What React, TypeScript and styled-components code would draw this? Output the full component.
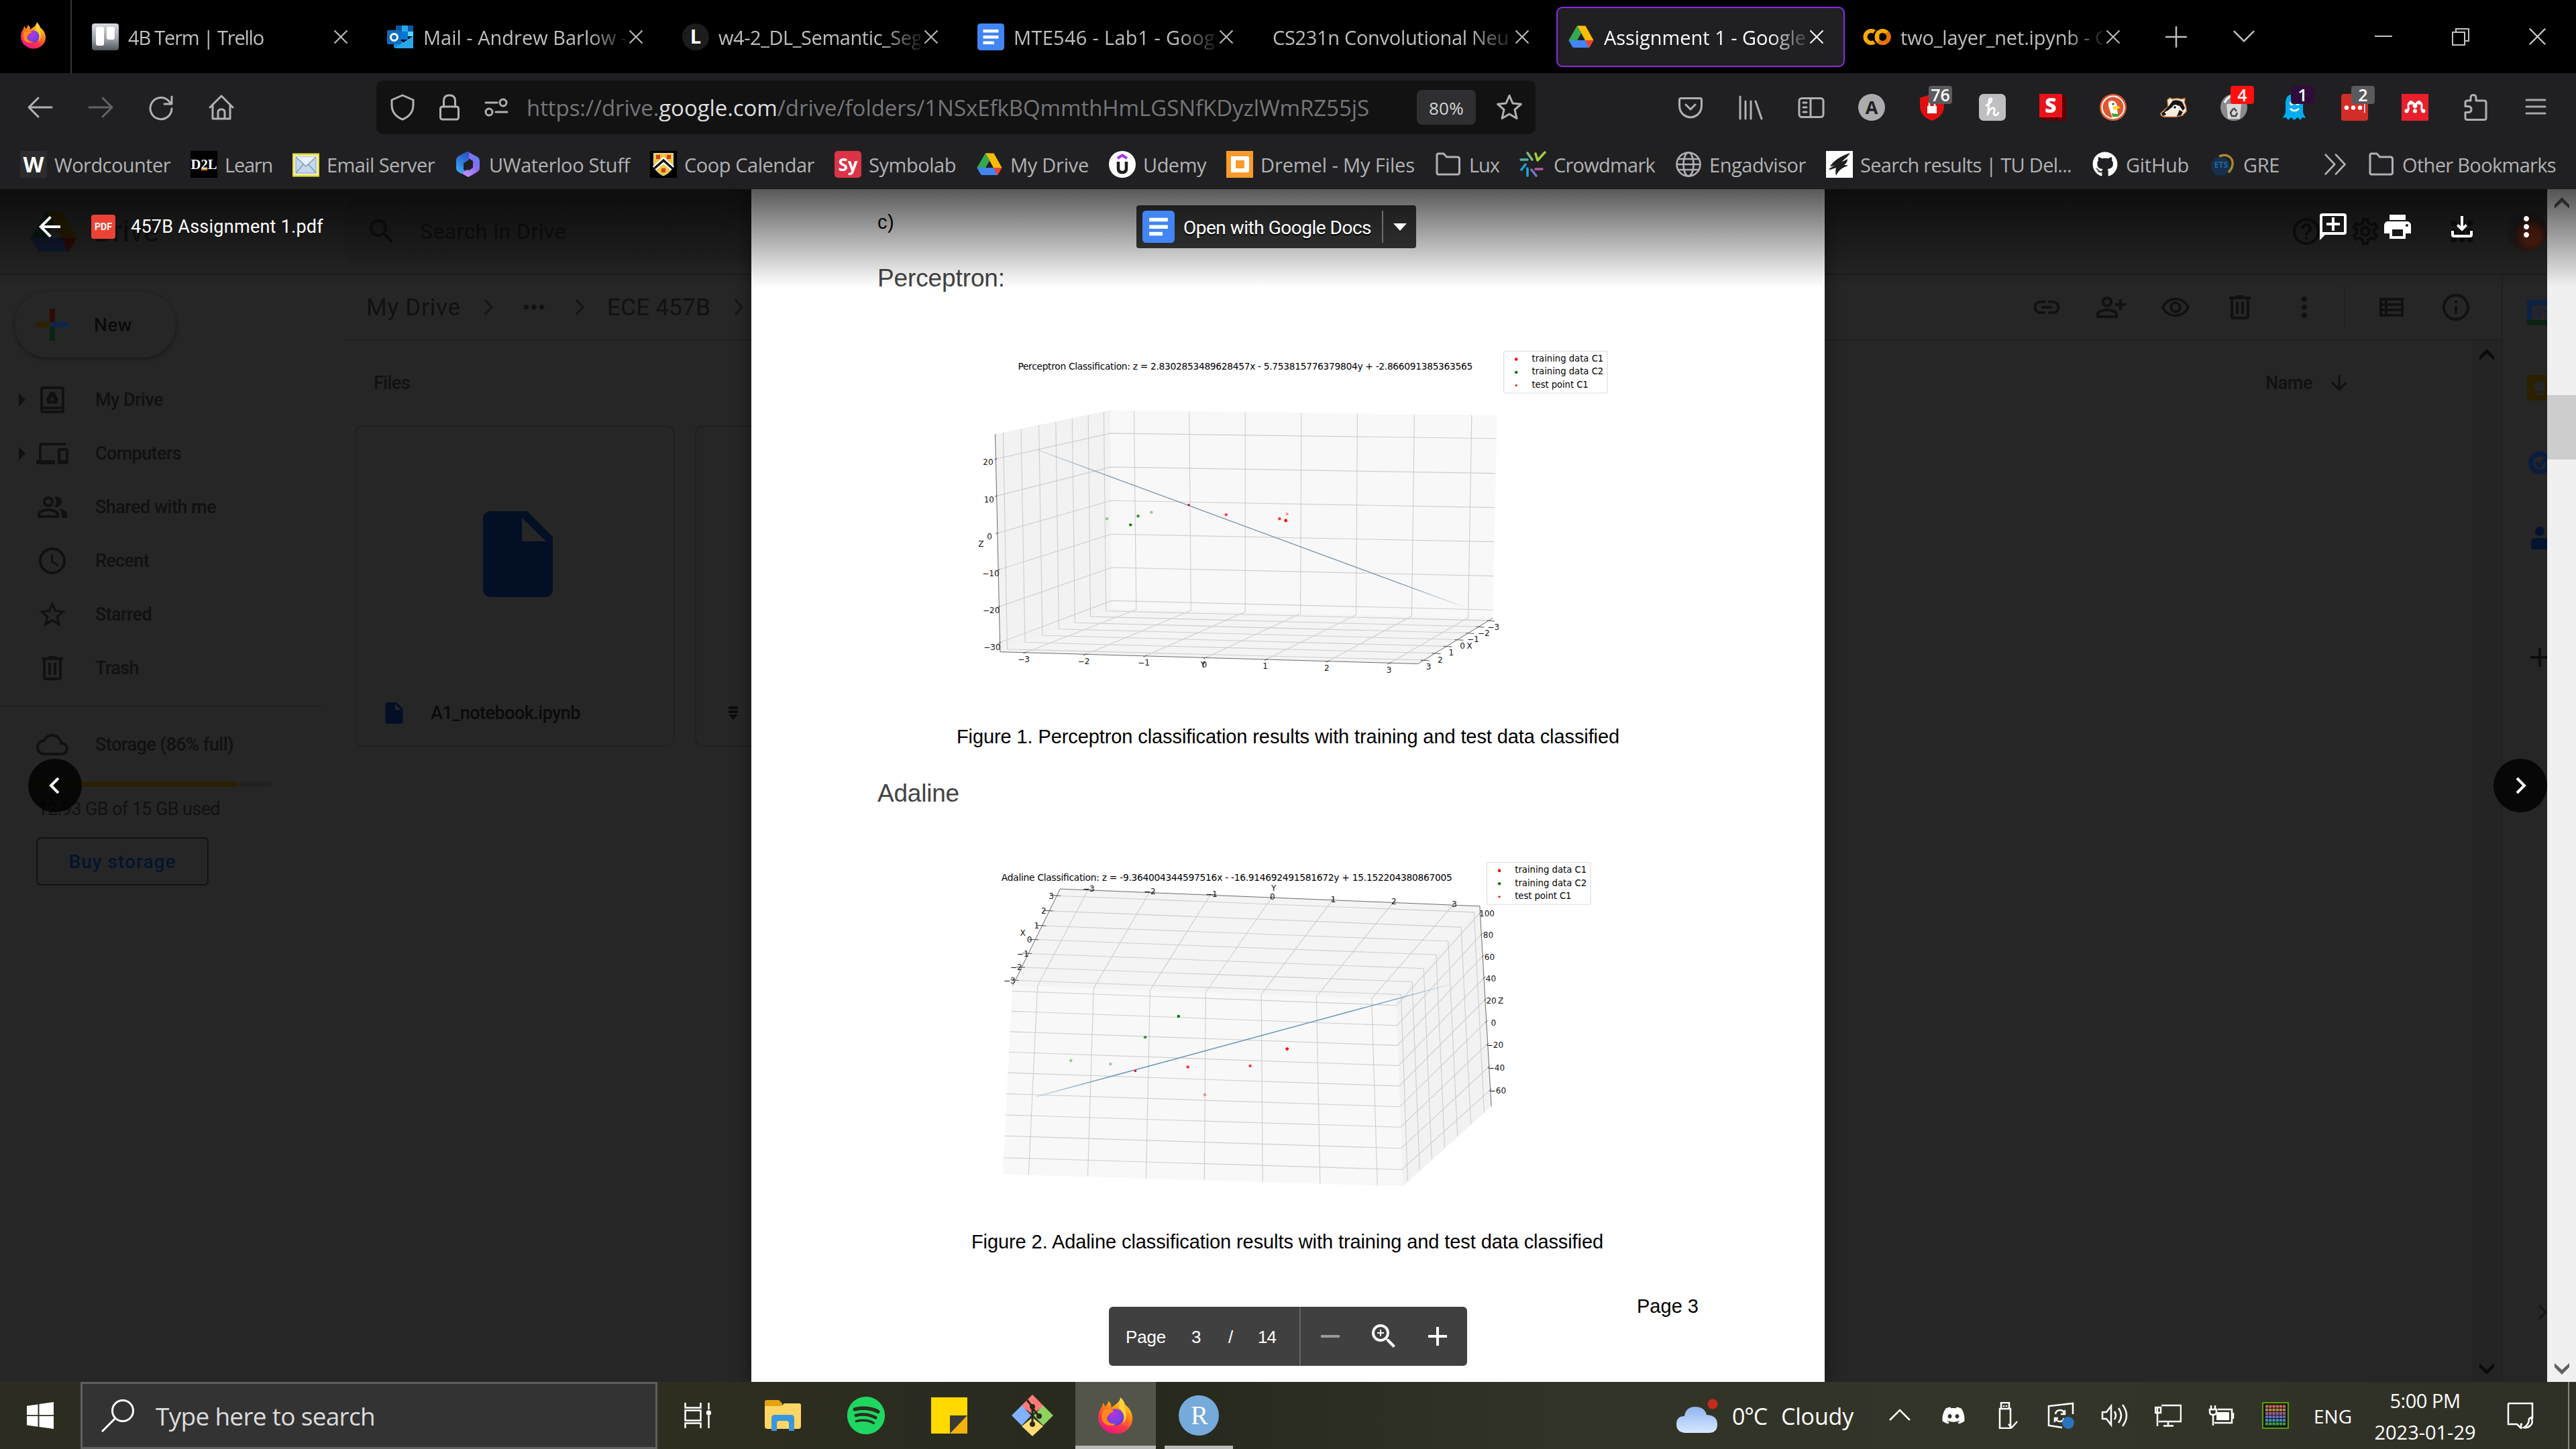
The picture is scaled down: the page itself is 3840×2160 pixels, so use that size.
import React, { useLayoutEffect, useRef, useState } from "react";
import styled, { createGlobalStyle, css } from "styled-components";
import {
  MdSearch, MdArrowBack, MdMoreVert, MdMoreHoriz, MdInfoOutline, MdHelpOutline,
  MdOutlineSettings, MdApps, MdPrint, MdZoomIn, MdAccessTime, MdStarBorder, MdOutlineDevices,
  MdOutlinePeopleAlt, MdOutlineRemoveRedEye, MdOutlinePersonAddAlt, MdArrowDownward,
} from "react-icons/md";
import { FaDiscord, FaSpotify, FaGithub } from "react-icons/fa";

const UI = `"Open Sans", "Noto Sans", sans-serif`;
const ROBOTO = `Roboto, "Open Sans", sans-serif`;
const ARIAL = `"Liberation Sans", Arial, sans-serif`;
const PLOT = `"DejaVu Sans", sans-serif`;

const Global = createGlobalStyle`
  html, body { margin: 0; padding: 0; background: #000; overflow: hidden; }
  * { box-sizing: border-box; }
  svg { display: block; flex: none; }
`;

/* ---------- text that is tracked to a known run length ---------- */

const FitBox = styled.span`
  display: inline-block;
  flex: none;
  white-space: pre;
`;

function Fit({ w, children }: { w: number; children: React.ReactNode }) {
  const ref = useRef<HTMLSpanElement>(null);
  const [ls, setLs] = useState<number | null>(null);
  useLayoutEffect(() => {
    const el = ref.current;
    if (!el || ls !== null) return;
    const n = (el.textContent || "").length;
    setLs((w - el.getBoundingClientRect().width) / Math.max(1, n));
  }, [ls, w]);
  return (
    <FitBox ref={ref} style={ls === null ? undefined : { letterSpacing: ls, width: w }}>
      {children}
    </FitBox>
  );
}

/* ---------- shared parts ---------- */

const Screen = styled.div`
  width: 3840px;
  height: 2160px;
  display: flex;
  flex-direction: column;
  background: #000;
  font-family: ${UI};
  overflow: hidden;
`;

const Cell = styled.div<{ $w: number }>`
  position: relative;
  width: ${(p) => p.$w}px;
  flex: none;
  display: flex;
  align-items: center;
  justify-content: center;
`;

const Spacer = styled.div<{ $w?: number }>`
  ${(p) => (p.$w === undefined ? css`flex: 1;` : css`flex: none; width: ${p.$w}px;`)}
`;

/* ---------- drawings ---------- */

function Firefox({ s = 40 }: { s?: number }) {
  return (
    <svg width={s} height={s} viewBox="0 0 40 40">
      <defs>
        <linearGradient id="ffA" x1="0.8" y1="0" x2="0.3" y2="1">
          <stop offset="0" stopColor="#fff44f" />
          <stop offset="0.35" stopColor="#ff980e" />
          <stop offset="0.7" stopColor="#ff3647" />
          <stop offset="1" stopColor="#e31587" />
        </linearGradient>
        <radialGradient id="ffB" cx="0.4" cy="0.35" r="0.8">
          <stop offset="0" stopColor="#b833e1" />
          <stop offset="0.6" stopColor="#7542e5" />
          <stop offset="1" stopColor="#592acb" />
        </radialGradient>
      </defs>
      <path fill="url(#ffA)" d="M25 0c3 3 4.500 6 5 8 4 3 8 8 8 15 0 9-8 16.500-18 16.500S1 32 1 22c0-5 1.500-9 4-12l1-4c1.500 1.500 2 3 2 4 2-1 3-3 4-6 2 2 3 4 3 7 4-3 9-5 10-11z" />
      <circle cx="19.500" cy="21.500" r="9" fill="url(#ffB)" />
      <path fill="#ff8a16" d="M6 15c3-3 8-3 12 0-2 .5-3 2-5 2.500 0 2-3 3-3 6 1 4 6 6 10 5-4 4-13 2-15-4-.8-3-.5-6 1-9.500z" />
      <path fill="#ffd43a" d="M25 1c3 4 4 7 4 10 3 5 3 13-2 18 4-8 1-14-4-18 1-3 2-6 2-10z" />
    </svg>
  );
}

function DriveLogo({ s = 40, dim = false }: { s?: number; dim?: boolean }) {
  const c = dim
    ? ["#0b1c11", "#2b2200", "#101b33", "#2e0b08"]
    : ["#34a853", "#fbbc04", "#4285f4", "#ea4335"];
  return (
    <svg width={s} height={s * 0.9} viewBox="0 0 40 36">
      <path fill={c[0]} d="M14 1.500h6.500l1 6L7 32.500 1.500 23z" />
      <path fill={c[1]} d="M14 1.500h12.500L38.500 23H26z" />
      <path fill={c[0]} d="M14 1.500l6.500 10.500-12 20.500L1.500 23z" />
      <path fill={c[2]} d="M1.500 23h25.500l5 11H9q-1.500 0-2.200-1.500z" />
      <path fill={c[3]} d="M26 23h12.500l-5.500 10q-.6 1-1.500 1z" />
    </svg>
  );
}

function DocsLogo({ s = 40 }: { s?: number }) {
  return (
    <svg width={s} height={s} viewBox="0 0 40 40">
      <rect width="40" height="40" rx="4.500" fill="#4285f4" />
      <path fill="#fff" d="M8.500 9h23v4.500h-23zM8.500 18h23v4.500h-23zM8.500 26.500H25V31H8.500z" />
    </svg>
  );
}

const Trello = () => (
  <svg width="40" height="40" viewBox="0 0 40 40">
    <defs>
      <linearGradient id="trl" x1="0" y1="0" x2="0" y2="1">
        <stop offset="0" stopColor="#d9dce0" /><stop offset="0.6" stopColor="#9aa0a6" /><stop offset="1" stopColor="#4f5558" />
      </linearGradient>
    </defs>
    <rect width="40" height="40" rx="4" fill="url(#trl)" />
    <rect x="6" y="5" width="12" height="28" rx="3" fill="#fff" />
    <rect x="22" y="5" width="12" height="19" rx="3" fill="#fff" />
  </svg>
);

const Outlook = () => (
  <svg width="40" height="40" viewBox="0 0 40 40">
    <path fill="#0a58a5" d="M13 3h26v12H13z" />
    <path fill="#28a8ea" d="M22 3h9v9h-9z" />
    <path fill="#50d9ff" d="M31 12h8v7h-8z" />
    <path fill="#0078d4" d="M13 12h18v12H13z" />
    <path fill="#1490df" d="M10 20l29 16H10zM39 18v19H12z" />
    <path fill="#28a8ea" d="M39 19L11 37h28z" />
    <rect y="10" width="21" height="21" rx="2" fill="#0f6cbd" />
    <circle cx="10.500" cy="20.500" r="5" fill="none" stroke="#fff" strokeWidth="3" />
  </svg>
);

const Lfav = () => (
  <svg width="40" height="40" viewBox="0 0 40 40">
    <circle cx="20" cy="20" r="20" fill="#1c1c1c" />
    <text x="20" y="30" textAnchor="middle" fontFamily={UI} fontWeight="700" fontSize="29" fill="#fff">L</text>
  </svg>
);

const Colab = () => (
  <svg width="42" height="40" viewBox="0 0 42 40">
    <circle cx="12.500" cy="20" r="9" fill="none" stroke="#f9ab00" strokeWidth="6" />
    <path d="M20 11a12 12 0 0 0 0 18" fill="none" stroke="#000" strokeWidth="3" />
    <circle cx="29.500" cy="20" r="9" fill="none" stroke="#f9ab00" strokeWidth="6" />
    <path d="M23 26.500a9 9 0 0 0 13-13" fill="none" stroke="#e8710a" strokeWidth="6" />
  </svg>
);

const Close = ({ s = 22, c = "#bdbdbd", w = 2 }: { s?: number; c?: string; w?: number }) => (
  <svg width={s} height={s} viewBox="0 0 22 22" stroke={c} strokeWidth={w} fill="none">
    <path d="M1.500 1.500l19 19M20.500 1.500l-19 19" />
  </svg>
);

/* outline icons of the browser chrome, drawn on a 40-unit grid */
function Line({ d, c = "#b1b1b3", w = 3, s = 40, children }: { d?: string; c?: string; w?: number; s?: number; children?: React.ReactNode }) {
  return (
    <svg width={s} height={s} viewBox="0 0 40 40" fill="none" stroke={c} strokeWidth={w} strokeLinecap="round" strokeLinejoin="round">
      {d && <path d={d} />}
      {children}
    </svg>
  );
}

const FolderLine = () => <Line d="M3 33V6.500Q3 4 5.500 4H13l4.500 5H33q3.500 0 3.500 3v20q0 3-3 3h-28Q3 35 3 32z" />;

/* ---------- tab strip ---------- */

const TabStrip = styled.div`
  height: 109px;
  flex: none;
  display: flex;
  align-items: stretch;
  background: #000;
`;

const PinnedTab = styled.div`
  width: 107px;
  margin-right: 8px;
  flex: none;
  display: flex;
  align-items: center;
  padding: 0 0 3px 30px;
  border-right: 2px solid #38383a;
`;

const Tab = styled.div<{ $active?: boolean }>`
  width: 430px;
  height: 90px;
  margin: 10px 5px 0;
  flex: none;
  display: flex;
  align-items: center;
  padding-left: ${(p) => (p.$active ? 15 : 17)}px;
  border-radius: 9px;
  font-size: 29px;
  color: ${(p) => (p.$active ? "#fbfbfe" : "#bfbfc1")};
  ${(p) => p.$active && css`background: #202022; border: 2px solid #8a2be2;`}
`;

const TabTitle = styled.div<{ $icon: boolean }>`
  width: ${(p) => (p.$icon ? 304 : 359)}px;
  margin-left: ${(p) => (p.$icon ? 11 : -3)}px;
  padding: 2px 0 0 3px;
  flex: none;
  overflow: hidden;
  line-height: 46px;
  mask-image: linear-gradient(90deg, #000 82%, rgba(0, 0, 0, 0.15) 100%);
`;

const TabClose = styled.div`
  margin-left: 5px;
`;

const tabs = [
  { t: "4B Term | Trello", w: 202, i: <Trello /> },
  { t: "Mail - Andrew Barlow -", w: 304, i: <Outlook /> },
  { t: "w4-2_DL_Semantic_Seg", w: 303, i: <Lfav /> },
  { t: "MTE546 - Lab1 - Goog", w: 300, i: <DocsLogo /> },
  { t: "CS231n Convolutional Neu", w: 352, i: null },
  { t: "Assignment 1 - Google", w: 301, i: <DriveLogo />, active: true },
  { t: "two_layer_net.ipynb - C", w: 308, i: <Colab /> },
];

/* ---------- navigation bar ---------- */

const NavBar = styled.div`
  height: 102px;
  flex: none;
  display: flex;
  align-items: center;
  background: #202022;
  padding-left: 15px;
`;

const UrlBar = styled.div`
  width: 1728px;
  height: 80px;
  margin: 0 186px;
  flex: none;
  display: flex;
  align-items: center;
  padding: 0 4px;
  border-radius: 10px;
  background: #121213;
`;

const Url = styled.div`
  margin-left: 10px;
  padding-top: 2px;
  font-size: 33px;
  line-height: 50px;
  color: #757577;
  b { font-weight: 400; color: #dededf; }
`;

const ZoomChip = styled.div`
  width: 88px;
  height: 52px;
  margin: 0 15px 0 auto;
  padding-top: 2px;
  display: flex;
  align-items: center;
  justify-content: center;
  border-radius: 8px;
  background: #2f2f31;
  color: #d5d5d6;
  font-size: 26px;
`;

const Badge = styled.div<{ $c: string }>`
  position: absolute;
  right: 15px;
  top: calc(50% - 32px);
  min-width: 35px;
  height: 27px;
  padding: 0 3px;
  border-radius: 4px;
  background: ${(p) => p.$c};
  color: #fff;
  font: 600 25px/26px ${UI};
  text-align: center;
`;

const ExtTile = styled.div<{ $c: string; $r?: number }>`
  width: 40px;
  height: 40px;
  border-radius: ${(p) => p.$r ?? 0}px;
  background: ${(p) => p.$c};
  display: flex;
  align-items: center;
  justify-content: center;
`;

/* ---------- bookmarks ---------- */

const Bookmarks = styled.div`
  height: 71px;
  flex: none;
  display: flex;
  align-items: flex-start;
  background: #202022;
  padding-left: 30px;
`;

const Mark = styled.div`
  height: 68px;
  flex: none;
  display: flex;
  align-items: center;
  gap: 11px;
  margin-right: 30px;
  font-size: 29px;
  color: #b2b2b4;
`;

const MarkIcon = styled.div`
  width: 40px;
  display: flex;
  justify-content: center;
`;

const LetterTile = styled.div<{ $bg: string; $c?: string; $s: number; $r?: number }>`
  width: 40px;
  height: 40px;
  display: flex;
  align-items: center;
  justify-content: center;
  border-radius: ${(p) => p.$r ?? 0}px;
  background: ${(p) => p.$bg};
  color: ${(p) => p.$c ?? "#fff"};
  font: 700 ${(p) => p.$s}px/40px ${UI};
  overflow: hidden;
`;

const Mail = () => (
  <svg width="40" height="40" viewBox="0 0 40 40">
    <rect x="1" y="5" width="38" height="32" fill="#f5f5e6" stroke="#e4e03c" strokeWidth="3" />
    <rect x="5" y="9" width="30" height="24" fill="#c6d9ec" stroke="#7d9cba" />
    <path d="M5 9l15 14L35 9M5 33l11-13M35 33L24 20" fill="#e9f1f9" stroke="#7d9cba" strokeWidth="1.500" />
  </svg>
);

const Hexa = () => (
  <svg width="40" height="40" viewBox="0 0 40 40">
    <defs>
      <linearGradient id="hx1" x1="0.6" y1="0" x2="0.2" y2="1">
        <stop offset="0" stopColor="#2a55c8" /><stop offset="0.5" stopColor="#2f7fe0" /><stop offset="1" stopColor="#3fb0f5" />
      </linearGradient>
      <linearGradient id="hx2" x1="0" y1="1" x2="1" y2="0">
        <stop offset="0" stopColor="#d59bff" /><stop offset="0.6" stopColor="#8a6cf0" /><stop offset="1" stopColor="#4a8cf0" />
      </linearGradient>
    </defs>
    <path fill="url(#hx2)" d="M21 2l13 7q3 2 3 5v12q0 3-3 5l-12 7q-2 1-4 0l-8-5 10-6 7-4v-8l-6-4z" />
    <path fill="url(#hx1)" d="M19 1q2 0 2 2v11l-8 4v8q0 4 5 3l-8 5-5-3q-3-2-3-5V13q0-3 3-5L16 2q2-1 3-1z" />
    <path fill="#202022" d="M17 15l4-1 6 4v7l-6 4-4-2z" />
  </svg>
);

const Crest = () => (
  <svg width="40" height="40" viewBox="0 0 40 40">
    <rect width="40" height="40" fill="#000" />
    <path fill="#f3c53a" stroke="#ddd" strokeWidth="1" d="M5.500 3.500h29V18c0 9-6 15-14.500 19C11.500 33 5.500 27 5.500 18z" />
    <path d="M6.500 26L20 14l13.500 12" fill="none" stroke="#fff" strokeWidth="8" />
    <path d="M6.500 26L20 14l13.500 12" fill="none" stroke="#111" strokeWidth="3.500" />
    <path d="M9 6h6v6H9zM25 6h6v6h-6zM17 26h6v6h-6z" fill="#d23a2c" />
  </svg>
);

const Udemy = () => (
  <svg width="40" height="40" viewBox="0 0 40 40">
    <circle cx="20" cy="20" r="20" fill="#fff" />
    <path d="M13 11l7-4.500 7 4.500" fill="none" stroke="#a435f0" strokeWidth="4" />
    <path d="M14 16v10q0 6 6 6t6-6V16" fill="none" stroke="#1c1d1f" strokeWidth="4.500" />
  </svg>
);

const Dremel = () => (
  <svg width="40" height="40" viewBox="0 0 40 40">
    <rect width="40" height="40" fill="#fb9a2b" />
    <path fill="#fff" d="M7 8h24q3 0 3 3v18q0 3-3 3H7z" />
    <path fill="#fb9a2b" d="M14 14h12q1 0 1 1v10q0 1-1 1H14z" />
  </svg>
);

const Crowdmark = () => (
  <svg width="40" height="40" viewBox="0 0 40 40" strokeWidth="3.500" strokeLinecap="round" fill="none">
    <path stroke="#a6ce39" d="M27 14L24 4M27 14L38 2" />
    <path stroke="#7cc07a" d="M12 3l7 10" />
    <path stroke="#4fb3ab" d="M2 13h10" />
    <path stroke="#1ba6dc" d="M9 20L3 28M12 26v11" />
    <path stroke="#7a78c8" d="M18 28l7 9" />
    <path stroke="#b05aa8" d="M24 27h10" />
  </svg>
);

const GlobeLine = () => (
  <Line w={2.600}>
    <circle cx="20" cy="20" r="17.500" />
    <ellipse cx="20" cy="20" rx="7.500" ry="17.500" />
    <path d="M3 20h34M5.500 12h29M5.500 28h29" />
  </Line>
);

const Flame = () => (
  <svg width="40" height="40" viewBox="0 0 40 40">
    <rect width="40" height="40" fill="#fdfdfd" />
    <path fill="#1d1d1d" d="M36 3c-9 3-22 8-30 20 3 0 6-1 9-3L4 27l2 1 9-3c-1 4-1 8 0 12 3-7 8-12 18-15-2-1-4-1-6-1 4-3 5-6 5-9-3 2-6 3-9 4 5-4 10-8 13-13z" />
  </svg>
);

const Gre = () => (
  <svg width="40" height="40" viewBox="0 0 40 40" fill="none">
    <circle cx="17" cy="23" r="14" fill="#17304c" />
    <path d="M15 8c12-5 21 2 20 12-.5 5-3 9-6 12" stroke="#a8872e" strokeWidth="3.500" />
    <text x="18" y="25" textAnchor="middle" fontFamily={UI} fontWeight="700" fontSize="12" fill="#2566a8">ETS</text>
  </svg>
);

const marks: { t: string; w: number; i: React.ReactNode }[] = [
  { t: "Wordcounter", w: 173, i: <LetterTile $bg="#2c2c2e" $s={32}>W</LetterTile> },
  {
    t: "Learn", w: 71,
    i: (
      <svg width="40" height="40" viewBox="0 0 40 40">
        <rect width="40" height="40" fill="#000" />
        <text x="20" y="27" textLength="39" lengthAdjust="spacingAndGlyphs" textAnchor="middle" fontFamily="Liberation Serif, serif" fontWeight="700" fontSize="21" fill="#fff">D2L</text>
        <rect x="16" y="26.500" width="9" height="2.500" fill="#e87511" />
      </svg>
    ),
  },
  { t: "Email Server", w: 161, i: <Mail /> },
  { t: "UWaterloo Stuff", w: 210, i: <Hexa /> },
  { t: "Coop Calendar", w: 194, i: <Crest /> },
  { t: "Symbolab", w: 130, i: <LetterTile $bg="#db3347" $s={26} $r={5}>Sy</LetterTile> },
  { t: "My Drive", w: 117, i: <DriveLogo /> },
  { t: "Udemy", w: 94, i: <Udemy /> },
  { t: "Dremel - My Files", w: 230, i: <Dremel /> },
  { t: "Lux", w: 45, i: <FolderLine /> },
  { t: "Crowdmark", w: 151, i: <Crowdmark /> },
  { t: "Engadvisor", w: 144, i: <GlobeLine /> },
  { t: "Search results | TU Del...", w: 315, i: <Flame /> },
  { t: "GitHub", w: 94, i: <FaGithub size={38} color="#fff" /> },
  { t: "GRE", w: 54, i: <Gre /> },
];

/* ---------- drive page behind the viewer ---------- */

const Content = styled.div`
  position: relative;
  height: 1778px;
  flex: none;
  background: #262626;
  overflow: hidden;
`;

const Drive = styled.div`
  position: absolute;
  inset: 0 43px 0 0;
  display: flex;
  flex-direction: column;
  font-family: ${ROBOTO};
  color: #101112;
  overflow: hidden;
`;

const DriveHeader = styled.div`
  height: 128px;
  flex: none;
  display: flex;
  align-items: center;
  border-bottom: 2px solid #1f1f1f;
  padding-left: 43px;
`;

const DriveName = styled.div`
  margin-left: 22px;
  width: 375px;
  font-size: 44px;
`;

const SearchField = styled.div`
  width: 1720px;
  height: 96px;
  display: flex;
  align-items: center;
  gap: 33px;
  padding-left: 31px;
  border-radius: 18px;
  background: #232324;
  font-size: 32px;
`;

const Avatar = styled.div`
  width: 60px;
  height: 60px;
  margin-left: 23px;
  flex: none;
  border-radius: 50%;
  background: radial-gradient(circle at 60% 60%, #5a2410 0 25%, #2d1a18 45%, #14282c 80%);
`;

const DriveBody = styled.div`
  flex: 1;
  display: flex;
`;

const Sidebar = styled.div`
  width: 513px;
  flex: none;
  display: flex;
  flex-direction: column;
`;

const NewButton = styled.div`
  width: 240px;
  height: 98px;
  margin: 25px 0 23px 22px;
  padding-left: 32px;
  display: flex;
  align-items: center;
  gap: 38px;
  border-radius: 49px;
  font-size: 28px;
  font-weight: 500;
  color: #0a0b0c;
  box-shadow: 0 2px 5px 1px #1b1b1b;
`;

const SideItem = styled.div`
  height: 80px;
  flex: none;
  display: flex;
  align-items: center;
  padding-left: 26px;
  font-size: 27px;
  font-weight: 500;
`;

const Caret = styled.div<{ $on?: boolean }>`
  width: 28px;
  &::before {
    content: "";
    display: block;
    width: 0;
    margin-left: 2px;
    border: 10px solid transparent;
    border-right: 0;
    border-left-color: ${(p) => (p.$on ? "#101112" : "transparent")};
  }
`;

const SideIcon = styled.div`
  width: 88px;
  flex: none;
`;

const SideRule = styled.div`
  width: 480px;
  height: 2px;
  margin: 16px 0 16px;
  background: #1f1f1f;
`;

const Meter = styled.div`
  display: flex;
  gap: 2px;
  width: 350px;
  height: 8px;
  margin: 15px 0 12px 54px;
`;

const MeterPart = styled.div<{ $w: number; $c: string }>`
  width: ${(p) => p.$w}px;
  border-radius: 4px;
  background: ${(p) => p.$c};
`;

const Used = styled.div`
  margin-left: 56px;
  font-size: 27px;
  line-height: 42px;
`;

const BuyButton = styled.div`
  width: 257px;
  height: 72px;
  margin: 21px 0 0 54px;
  display: flex;
  align-items: center;
  justify-content: center;
  border: 2px solid #121212;
  border-radius: 7px;
  font-size: 28px;
  font-weight: 500;
  color: #04142e;
`;

const Main = styled.div`
  flex: 1;
  display: flex;
  flex-direction: column;
`;

const Toolbar = styled.div`
  height: 98px;
  flex: none;
  display: flex;
  align-items: center;
  padding: 0 20px 0 33px;
  border-bottom: 2px solid #1f1f1f;
  font-size: 35px;
`;

const ToolRule = styled.div`
  width: 2px;
  height: 64px;
  margin: 0 21px 0 11px;
  background: #202020;
`;

const Files = styled.div`
  flex: 1;
  display: flex;
`;

const FilesPane = styled.div`
  flex: 1;
`;

const FilesHead = styled.div`
  height: 126px;
  display: flex;
  align-items: center;
  padding: 0 180px 0 44px;
  font-size: 27px;
  font-weight: 500;
`;

const CardRow = styled.div`
  display: flex;
  gap: 30px;
  padding-left: 16px;
`;

const Card = styled.div`
  width: 477px;
  height: 479px;
  flex: none;
  display: flex;
  flex-direction: column;
  border: 2px solid #202020;
  border-radius: 12px;
`;

const CardPreview = styled.div`
  height: 380px;
  padding: 126px 0 0 189px;
`;

const CardName = styled.div<{ $pad?: number }>`
  height: 97px;
  display: flex;
  align-items: center;
  padding-left: ${(p) => p.$pad ?? 43}px;
  gap: 41px;
  font-size: 27px;
  font-weight: 500;
  color: #0a0b0c;
`;

const InnerScroll = styled.div`
  width: 44px;
  display: flex;
  flex-direction: column;
  align-items: center;
  justify-content: space-between;
  padding: 12px 0 11px;
  background: #242424;
`;

const SidePanel = styled.div`
  width: 68px;
  flex: none;
  overflow: hidden;
  border-left: 2px solid #202020;
  padding: 37px 0 0 36px;
  display: flex;
  flex-direction: column;
  gap: 74px;
`;

const PanelGap = styled.div<{ $h: number }>`
  height: ${(p) => p.$h}px;
  margin-bottom: -74px;
  flex: none;
`;

const PanelToggle = styled.div`
  padding: 7px 0 0 12px;
`;

const Mi = styled.svg.attrs({ viewBox: "0 0 24 24", fill: "currentColor" })<{ $s?: number }>`
  width: ${(p) => p.$s ?? 48}px;
  height: ${(p) => p.$s ?? 48}px;
`;

const Trash = () => (
  <Mi><path d="M15 4V3H9v1H4v2h1v13c0 1.100.9 2 2 2h10c1.100 0 2-.9 2-2V6h1V4h-5zm2 15H7V6h10v13zM9 8h2v9H9zm4 0h2v9h-2z" /></Mi>
);

const FileShape = ({ w, h }: { w: number; h: number }) => (
  <svg width={w} height={h} viewBox="0 0 104 128">
    <path fill="#020f24" fillRule="evenodd" d="M13 0h53l38 38v77q0 13-13 13H13Q0 128 0 115V13Q0 0 13 0zM58 10v35h36z" />
  </svg>
);

const Crumb = ({ s = 24 }: { s?: number }) => (
  <svg width={s} height={s} viewBox="0 0 24 24" fill="none" stroke="#141516" strokeWidth="3"><path d="M7 1l10 11L7 23" /></svg>
);

const ScrollArrow = ({ up, c }: { up?: boolean; c: string }) => (
  <svg width="22" height="18" viewBox="0 0 22 18" fill={c}>
    {up ? <path d="M0 17v-6L11 0l11 11v6L11 7z" /> : <path d="M0 1v6l11 11L22 7V1L11 11z" />}
  </svg>
);

function DrivePage() {
  const side: [string, number, React.ReactNode, boolean?][] = [
    ["My Drive", 101, <Mi><path fillRule="evenodd" d="M5 2h14q2 0 2 2v16q0 2-2 2H5q-2 0-2-2V4q0-2 2-2zm0 2v13h14V4zm0 15v1h14v-1zM10.500 6h3l3.200 6-1.500 3H8.800l-1.500-3zM12 9.500L10.500 12.500h3z" /></Mi>, true],
    ["Computers", 128, <MdOutlineDevices size={48} />, true],
    ["Shared with me", 180, <MdOutlinePeopleAlt size={48} />],
    ["Recent", 80, <MdAccessTime size={48} />],
    ["Starred", 84, <MdStarBorder size={48} />],
    ["Trash", 65, <Trash />],
  ];
  return (
    <Drive>
      <DriveHeader>
        <DriveLogo s={74} dim />
        <DriveName><Fit w={98}>Drive</Fit></DriveName>
        <SearchField><MdSearch size={48} /><Fit w={218}>Search in Drive</Fit></SearchField>
        <Spacer />
        <Cell $w={88}><MdHelpOutline size={48} /></Cell>
        <Cell $w={88}><MdOutlineSettings size={48} /></Cell>
        <Spacer $w={56} />
        <Cell $w={88}><MdApps size={48} /></Cell>
        <Avatar />
      </DriveHeader>
      <DriveBody>
        <Sidebar>
          <NewButton>
            <svg width="48" height="48" viewBox="0 0 48 48">
              <path fill="#2e0b08" d="M20 0h8v20h-8z" /><path fill="#2b2200" d="M0 20h20v8H0z" />
              <path fill="#10244a" d="M24 20h24v8H20z" /><path fill="#0a2313" d="M20 28h8v20h-8z" />
            </svg>
            <Fit w={57}>New</Fit>
          </NewButton>
          {side.map(([t, w, i, open]) => (
            <SideItem key={t}>
              <Caret $on={open} />
              <SideIcon>{i}</SideIcon>
              <Fit w={w}>{t}</Fit>
            </SideItem>
          ))}
          <SideRule />
          <SideItem>
            <Caret />
            <SideIcon>
              <Mi><path d="M19.350 10.040A7.490 7.490 0 0 0 12 4C9.110 4 6.600 5.640 5.350 8.040A5.994 5.994 0 0 0 0 14c0 3.310 2.690 6 6 6h13c2.760 0 5-2.240 5-5 0-2.640-2.050-4.780-4.650-4.960zM19 18H6c-2.210 0-4-1.790-4-4s1.790-4 4-4h.71C7.370 7.690 9.480 6 12 6c3.040 0 5.500 2.460 5.500 5.500v.5H19c1.660 0 3 1.340 3 3s-1.340 3-3 3z" /></Mi>
            </SideIcon>
            <Fit w={206}>Storage (86% full)</Fit>
          </SideItem>
          <Meter><MeterPart $w={302} $c="#2b2000" /><MeterPart $w={46} $c="#212122" /></Meter>
          <Used><Fit w={272}>12.93 GB of 15 GB used</Fit></Used>
          <BuyButton><Fit w={160}>Buy storage</Fit></BuyButton>
        </Sidebar>
        <Main>
          <Toolbar>
            <Fit w={141}>My Drive</Fit>
            <Cell $w={82}><Crumb /></Cell>
            <Cell $w={54}><MdMoreHoriz size={46} /></Cell>
            <Cell $w={82}><Crumb /></Cell>
            <Fit w={154}>ECE 457B</Fit>
            <Cell $w={84}><Crumb /></Cell>
            <Spacer />
            <Cell $w={96}>
              <Mi><path d="M4.200 12c0-1.700 1.400-3.100 3.100-3.100H11V7H7.300C4.500 7 2.300 9.200 2.300 12s2.200 5 5 5H11v-1.900H7.300c-1.700 0-3.100-1.400-3.100-3.100zM8 13h8v-2H8zm8.700-6H13v1.900h3.700c1.700 0 3.100 1.400 3.100 3.100s-1.400 3.100-3.100 3.100H13V17h3.700c2.800 0 5-2.200 5-5s-2.200-5-5-5z" /></Mi>
            </Cell>
            <Cell $w={96}><MdOutlinePersonAddAlt size={48} /></Cell>
            <Cell $w={96}><MdOutlineRemoveRedEye size={46} /></Cell>
            <Cell $w={96}><Trash /></Cell>
            <Cell $w={96}><MdMoreVert size={48} /></Cell>
            <ToolRule />
            <Cell $w={96}><Mi><path fillRule="evenodd" d="M3 5h18v14H3zm2 2v2h2V7zm4 0v2h10V7zm-4 4v2h2v-2zm4 0v2h10v-2zm-4 4v2h2v-2zm4 0v2h10v-2z" /></Mi></Cell>
            <Cell $w={96}><MdInfoOutline size={48} /></Cell>
          </Toolbar>
          <Files>
            <FilesPane>
              <FilesHead>
                <Fit w={54}>Files</Fit>
                <Spacer />
                <Fit w={70}>Name</Fit>
                <Spacer $w={22} />
                <MdArrowDownward size={36} />
              </FilesHead>
              <CardRow>
                <Card>
                  <CardPreview><FileShape w={104} h={128} /></CardPreview>
                  <CardName><FileShape w={27} h={32} /><Fit w={223}>A1_notebook.ipynb</Fit></CardName>
                </Card>
                <Card>
                  <CardPreview />
                  <CardName $pad={48}>
                    <svg width="14" height="20" viewBox="0 0 14 20" fill="#0c0d0e">
                      <path d="M0 0h14v4H0zM0 6h14v4H0zM0 12h14l-7 8z" />
                    </svg>
                  </CardName>
                </Card>
              </CardRow>
            </FilesPane>
            <InnerScroll><ScrollArrow up c="#0b0b0b" /><ScrollArrow c="#0b0b0b" /></InnerScroll>
          </Files>
        </Main>
        <SidePanel>
          <svg width="38" height="38" viewBox="0 0 38 38">
            <path fill="#0d2145" d="M0 0h38v30H0z" /><path fill="#0a2313" d="M0 30h38v8H0z" /><path fill="#262626" d="M8 8h30v22H8z" />
            <text x="11" y="26" fontFamily={ROBOTO} fontSize="17" fill="#0d2145">31</text>
          </svg>
          <svg width="38" height="38" viewBox="0 0 38 38">
            <rect width="38" height="38" rx="3" fill="#2b2000" /><circle cx="19" cy="17" r="8" fill="#262626" /><path fill="#262626" d="M14 26h10v4H14z" />
          </svg>
          <svg width="38" height="38" viewBox="0 0 38 38" fill="none" stroke="#0a1d40">
            <circle cx="19" cy="19" r="13.500" strokeWidth="7" /><path d="M13 18l6 6L30 10" strokeWidth="5" />
          </svg>
          <svg width="38" height="38" viewBox="0 0 38 38" fill="#04142e">
            <circle cx="19" cy="9" r="7" /><path d="M6 36V26q0-7 7-7h12q7 0 7 7v10z" />
          </svg>
          <PanelGap $h={66} />
          <svg width="38" height="38" viewBox="0 0 38 38" fill="none" stroke="#0c0d0e" strokeWidth="4"><path d="M19 5v28M5 19h28" /></svg>
          <PanelGap $h={865} />
          <PanelToggle><Crumb s={22} /></PanelToggle>
        </SidePanel>
      </DriveBody>
    </Drive>
  );
}

/* ---------- plots ---------- */

type Pt = [number, number];
type Label = [string, number, number];

interface PlotData {
  height: number;
  title: { text: string; x: number; y: number; w: number };
  legend: Pt;
  panes: { c: string; p: Pt[] }[];
  grid: Pt[][];
  axis: Pt[];
  ticks: [Pt, Pt][];
  labels: Label[];
  plane: { a: Pt; b: Pt; c: string };
  dots: [number, number, string, number, number][];
}

const KX = 1.5077;
const KY = 2.529;
const pts = (p: Pt[]) => p.map(([x, y]) => `${(x / KX).toFixed(1)},${(y / KY).toFixed(1)}`).join(" ");

const RED = "#ff0000";
const GREEN = "#008000";

const perceptron: PlotData = {
  height: 530,
  title: { text: "Perceptron Classification: z = 2.8302853489628457x - 5.753815776379804y + -2.866091385363565", x: 177, y: 130, w: 1022 },
  legend: [1269, 59],
  panes: [
    { c: "#f2f2f2", p: [[126, 372], [385, 282], [388, 1030], [137, 1193]] },
    { c: "#f8f8f8", p: [[385, 282], [1254, 301], [1244, 1066], [388, 1030]] },
    { c: "#f4f4f4", p: [[388, 1030], [1244, 1066], [1076, 1238], [137, 1193]] },
  ],
  grid: [
    [[144, 366], [153, 1183], [1088, 1224]],
    [[184, 352], [193, 1157], [1113, 1198]],
    [[224, 338], [232, 1131], [1139, 1172]],
    [[262, 326], [269, 1107], [1165, 1147]],
    [[299, 313], [305, 1083], [1190, 1122]],
    [[335, 300], [340, 1060], [1213, 1098]],
    [[370, 288], [375, 1039], [1237, 1075]],
    [[127, 466], [385, 369], [1252, 389]],
    [[128, 606], [386, 496], [1250, 520]],
    [[130, 746], [386, 623], [1248, 649]],
    [[133, 884], [387, 749], [1247, 778]],
    [[134, 1023], [388, 875], [1246, 907]],
    [[136, 1158], [388, 1000], [1245, 1035]],
    [[438, 285], [443, 1033], [193, 1196]],
    [[562, 288], [566, 1037], [328, 1203]],
    [[688, 291], [688, 1042], [463, 1209]],
    [[814, 294], [812, 1048], [598, 1216]],
    [[940, 296], [937, 1053], [735, 1222]],
    [[1068, 298], [1062, 1058], [873, 1229]],
    [[1197, 300], [1189, 1064], [1012, 1236]],
  ],
  axis: [[126, 372], [137, 1193], [1076, 1238], [1244, 1066]],
  ticks: [
    [[124, 468], [130, 464]], [[125, 608], [131, 604]], [[127, 748], [133, 744]],
    [[130, 886], [136, 882]], [[131, 1025], [137, 1021]], [[133, 1161], [139, 1157]],
    [[189, 1199], [197, 1193]], [[324, 1206], [332, 1200]], [[459, 1212], [467, 1206]],
    [[594, 1219], [602, 1213]], [[731, 1225], [739, 1219]], [[869, 1232], [877, 1226]], [[1008, 1239], [1016, 1233]],
    [[1082, 1224], [1102, 1226]], [[1107, 1198], [1127, 1200]], [[1133, 1172], [1153, 1174]],
    [[1159, 1147], [1178, 1149]], [[1184, 1122], [1202, 1124]], [[1207, 1098], [1225, 1100]], [[1231, 1075], [1248, 1077]],
  ],
  labels: [
    ["20", 110, 489], ["10", 112, 630], ["0", 113, 770], ["−10", 116, 909], ["−20", 117, 1047], ["−30", 119, 1185], ["Z", 94, 797],
    ["−3", 190, 1232], ["−2", 325, 1239], ["−1", 460, 1245], ["0", 596, 1252], ["Y", 593, 1252], ["1", 733, 1258], ["2", 871, 1265], ["3", 1011, 1271],
    ["3", 1100, 1260], ["2", 1126, 1234], ["1", 1151, 1207], ["0", 1176, 1182], ["X", 1192, 1182], ["−1", 1200, 1157], ["−2", 1224, 1133], ["−3", 1246, 1110],
  ],
  plane: { a: [222, 432], b: [1180, 1024], c: "#8299ad" },
  dots: [
    [377, 691, GREEN, 0.4, 2.2], [477, 667, GREEN, 0.4, 2.2], [430, 714, GREEN, 1, 2.2], [447, 681, GREEN, 0.8, 2.2],
    [561, 639, "#c00020", 1, 1.6], [645, 676, RED, 0.75, 2.2], [765, 691, RED, 0.8, 2.2], [779, 698, RED, 1, 2.4], [782, 673, RED, 0.4, 2.2],
  ],
};

const adaline: PlotData = {
  height: 550,
  title: { text: "Adaline Classification: z = -9.364004344597516x - -16.914692491581672y + 15.152204380867005", x: 140, y: 160, w: 1013 },
  legend: [1231, 90],
  panes: [
    { c: "#f4f4f4", p: [[272, 190], [1215, 255], [1027, 607], [165, 555]] },
    { c: "#f8f8f8", p: [[165, 555], [1027, 607], [1042, 1311], [143, 1266]] },
    { c: "#f2f2f2", p: [[1215, 255], [1241, 1010], [1042, 1311], [1027, 607]] },
  ],
  grid: [
    [[254, 215], [1202, 278], [1225, 1033]],
    [[237, 272], [1173, 334], [1195, 1076]],
    [[221, 328], [1144, 387], [1165, 1122]],
    [[207, 380], [1117, 438], [1136, 1166]],
    [[193, 433], [1089, 490], [1107, 1209]],
    [[178, 485], [1063, 540], [1080, 1250]],
    [[163, 534], [1038, 588], [1053, 1291]],
    [[334, 195], [221, 557], [201, 1268]],
    [[472, 204], [347, 565], [334, 1274]],
    [[609, 213], [474, 572], [465, 1281]],
    [[747, 223], [599, 580], [596, 1287]],
    [[884, 232], [724, 588], [727, 1294]],
    [[1020, 242], [848, 596], [856, 1301]],
    [[1155, 251], [972, 603], [985, 1308]],
    [[164, 575], [1028, 629], [1216, 280]],
    [[162, 651], [1029, 705], [1219, 361]],
    [[159, 728], [1030, 780], [1222, 443]],
    [[157, 805], [1032, 856], [1225, 525]],
    [[154, 883], [1034, 933], [1227, 607]],
    [[151, 962], [1035, 1011], [1229, 691]],
    [[149, 1042], [1037, 1088], [1232, 775]],
    [[147, 1121], [1038, 1168], [1235, 861]],
    [[145, 1203], [1040, 1248], [1238, 948]],
  ],
  axis: [[165, 555], [272, 190], [1215, 255], [1241, 1010]],
  ticks: [
    [[250, 214], [273, 216]], [[234, 271], [256, 273]], [[218, 327], [240, 329]], [[202, 380], [224, 382]],
    [[188, 432], [208, 434]], [[174, 484], [193, 486]], [[160, 533], [179, 535]],
    [[328, 193], [348, 194]], [[466, 202], [486, 203]], [[604, 211], [624, 212]],
    [[745, 229], [749, 217]], [[882, 238], [886, 226]], [[1018, 248], [1022, 236]], [[1153, 257], [1157, 245]],
    [[1214, 284], [1219, 275]], [[1217, 365], [1222, 356]], [[1220, 447], [1225, 438]], [[1222, 529], [1228, 520]],
    [[1225, 611], [1230, 602]], [[1227, 695], [1232, 686]], [[1230, 779], [1235, 770]], [[1233, 865], [1238, 856]], [[1236, 952], [1241, 943]],
  ],
  labels: [
    ["3", 252, 227], ["2", 235, 284], ["1", 219, 339], ["0", 203, 391], ["−1", 188, 444], ["−2", 173, 495], ["−3", 158, 546], ["X", 188, 366],
    ["−3", 336, 201], ["−2", 473, 211], ["−1", 612, 220], ["0", 749, 230], ["1", 886, 240], ["2", 1022, 249], ["3", 1158, 258], ["Y", 752, 196],
    ["100", 1231, 294], ["80", 1234, 375], ["60", 1237, 457], ["40", 1240, 539], ["20", 1241, 622], ["Z", 1262, 622], ["0", 1246, 705],
    ["−20", 1249, 790], ["−40", 1252, 876], ["−60", 1255, 962],
  ],
  plane: { a: [218, 973], b: [1146, 551], c: "#5f93b8" },
  dots: [
    [538, 670, GREEN, 1, 2.3], [463, 749, GREEN, 0.8, 2.2], [296, 837, GREEN, 0.4, 2.2], [385, 850, GREEN, 0.4, 2.2],
    [441, 876, "#e00010", 1, 1.7], [559, 861, RED, 0.8, 2.2], [699, 857, RED, 0.8, 2.2], [782, 793, RED, 1, 2.4], [597, 966, RED, 0.4, 2.2],
  ],
};

const PlotSvg = styled.svg<{ $h: number; $mt: number }>`
  width: 1040px;
  height: ${(p) => p.$h}px;
  margin: ${(p) => p.$mt}px 0 0 280px;
  font-family: ${PLOT};
`;

function Plot({ d, mt, id }: { d: PlotData; mt: number; id: string }) {
  const [lx, ly] = d.legend;
  const rows: [string, string, number, number][] = [["training data C1", RED, 2.3, 161], ["training data C2", GREEN, 2.3, 161], ["test point C1", RED, 1.6, 127]];
  const { a, b, c } = d.plane;
  return (
    <PlotSvg $h={d.height} $mt={mt} viewBox={`0 0 1040 ${d.height}`}>
      <defs>
        <linearGradient id={id} gradientUnits="userSpaceOnUse" x1={a[0] / KX} y1={a[1] / KY} x2={b[0] / KX} y2={b[1] / KY}>
          <stop offset="0" stopColor={c} stopOpacity="0.25" /><stop offset="0.18" stopColor={c} />
          <stop offset="0.85" stopColor={c} /><stop offset="1" stopColor={c} stopOpacity="0.1" />
        </linearGradient>
      </defs>
      {d.panes.map((p, i) => <polygon key={i} points={pts(p.p)} fill={p.c} />)}
      {d.grid.map((g, i) => <polyline key={i} points={pts(g)} fill="none" stroke="#cecece" strokeWidth="1.1" />)}
      <polyline points={pts(d.axis)} fill="none" stroke="#6b6b6b" strokeWidth="1" />
      {d.ticks.map((t, i) => <polyline key={i} points={pts(t)} stroke="#555" strokeWidth="1" />)}
      <polyline points={pts([a, b])} stroke={`url(#${id})`} strokeWidth="1.4" />
      {d.dots.map(([x, y, f, o, r], i) => <circle key={i} cx={x / KX} cy={y / KY} r={r} fill={f} opacity={o} />)}
      {d.labels.map(([t, x, y], i) => <text key={i} x={x / KX} y={y / KY} fontSize="12" textAnchor="middle" fill="#111">{t}</text>)}
      <text x={d.title.x / KX} y={d.title.y / KY} fontSize="13.800" textLength={d.title.w / KX} fill="#000">{d.title.text}</text>
      <rect x={lx / KX} y={ly / KY} width={233 / KX} height={158.500 / KY} rx="2.500" fill="#fff" stroke="#dedede" strokeWidth="1.2" />
      {rows.map(([t, f, r, w], i) => (
        <React.Fragment key={t}>
          <circle cx={(lx + 28) / KX} cy={(ly + 31 + i * 49.200) / KY} r={r} fill={f} />
          <text x={(lx + 63) / KX} y={(ly + 39 + i * 49.500) / KY} fontSize="13.200" textLength={w / KX} fill="#000">{t}</text>
        </React.Fragment>
      ))}
    </PlotSvg>
  );
}

/* ---------- pdf viewer ---------- */

const Viewer = styled.div`
  position: absolute;
  inset: 0;
  display: flex;
`;

const Stage = styled.div`
  width: 3797px;
  flex: none;
  padding-left: 1120px;
`;

const Page = styled.div`
  width: 1600px;
  height: 1778px;
  padding-top: 29px;
  overflow: hidden;
  background: #fff;
  box-shadow: 0 0 26px rgba(0, 0, 0, 0.45);
  font-family: ${ARIAL};
  color: #000;
`;

const Para = styled.div<{ $x: number; $mt?: number }>`
  padding-left: ${(p) => p.$x}px;
  margin-top: ${(p) => p.$mt ?? 0}px;
  font-size: 29px;
  line-height: 40px;
`;

const Heading = styled.div<{ $mt: number }>`
  padding-left: 188px;
  margin-top: ${(p) => p.$mt}px;
  font-size: 37px;
  line-height: 50px;
  color: #434343;
`;

const OuterScroll = styled.div`
  flex: 1;
  display: flex;
  flex-direction: column;
  align-items: center;
  background: #f0f0f0;
  padding: 12px 0 11px;
`;

const Thumb = styled.div`
  width: 43px;
  height: 96px;
  margin: 277px 0 auto;
  background: #cdcdcd;
`;

const ViewerHeader = styled.div`
  position: absolute;
  inset: 0 0 auto 0;
  height: 146px;
  padding-left: 50px;
  background: linear-gradient(rgba(0, 0, 0, 0.65), rgba(0, 0, 0, 0));
`;

const HeaderRow = styled.div`
  height: 112px;
  display: flex;
  align-items: center;
  color: #fff;
  font: 450 27px/40px ${ROBOTO};
`;

const PdfTag = styled.div`
  width: 36px;
  height: 36px;
  margin: 0 23px 0 38px;
  border-radius: 4px;
  background: #ea4335;
  font: 700 14px/36px ${ROBOTO};
  text-align: center;
`;

const OpenWith = styled.div`
  width: 417px;
  height: 64px;
  margin-left: 1212px;
  display: flex;
  align-items: center;
  padding-left: 9px;
  border-radius: 4px;
  background: linear-gradient(#1e1e1e, #2d2d2d);
  font-size: 28px;
  font-weight: 400;
`;

const OpenLabel = styled.div`
  padding-top: 3px;
  text-shadow: 0 2px 0 #000;
`;

const OpenRule = styled.div`
  width: 2px;
  height: 48px;
  margin: 0 15px 0 16px;
  background: #6b6b6b;
`;

const Round = styled.div<{ $x: number }>`
  position: absolute;
  left: ${(p) => p.$x}px;
  top: 849px;
  width: 80px;
  height: 80px;
  border-radius: 50%;
  display: flex;
  align-items: center;
  justify-content: center;
  background: rgba(0, 0, 0, 0.8);
`;

const Pager = styled.div`
  position: absolute;
  left: 1653px;
  top: 1666px;
  width: 534px;
  height: 88px;
  display: flex;
  align-items: center;
  border-radius: 6px;
  background: #404040;
  color: #fff;
  font: 26px/42px ${ARIAL};
  padding-left: 25px;
`;

const PagerText = styled.div`
  display: flex;
  padding-top: 2px;
`;

const PagerRule = styled.div`
  width: 2px;
  height: 88px;
  background: #666;
`;

function PdfViewer() {
  return (
    <Viewer>
      <Stage>
        <Page>
          <Para $x={188}><Fit w={25}>c)</Fit></Para>
          <Heading $mt={39}><Fit w={190}>Perceptron:</Fit></Heading>
          <Plot d={perceptron} mt={60} id="planeA" />
          <Para $x={306} $mt={48}><Fit w={988}>Figure 1. Perceptron classification results with training and test data classified</Fit></Para>
          <Heading $mt={40}><Fit w={122}>Adaline</Fit></Heading>
          <Plot d={adaline} mt={42} id="planeB" />
          <Para $x={328} $mt={31}><Fit w={942}>Figure 2. Adaline classification results with training and test data classified</Fit></Para>
          <Para $x={1320} $mt={56}><Fit w={92}>Page 3</Fit></Para>
        </Page>
      </Stage>
      <OuterScroll>
        <ScrollArrow up c="#606060" />
        <Thumb />
        <ScrollArrow c="#606060" />
      </OuterScroll>
      <ViewerHeader>
        <HeaderRow>
          <MdArrowBack size={48} />
          <PdfTag>PDF</PdfTag>
          <Fit w={287}>457B Assignment 1.pdf</Fit>
          <OpenWith>
            <DocsLogo s={48} />
            <Spacer $w={13} />
            <OpenLabel><Fit w={280}>Open with Google Docs</Fit></OpenLabel>
            <OpenRule />
            <svg width="20" height="11" viewBox="0 0 20 11" fill="#fff"><path d="M0 0h20L10 11z" /></svg>
          </OpenWith>
          <Spacer />
          <Cell $w={96}>
            <Mi><path fillRule="evenodd" d="M4 2h16q2 0 2 2v12q0 2-2 2H6l-4 4V4q0-2 2-2zm0 2v12h16V4zM11 5h2v4h4v2h-4v4h-2v-4H7V9h4z" /></Mi>
          </Cell>
          <Cell $w={96}><MdPrint size={48} /></Cell>
          <Cell $w={96}><Mi><path d="M16 11.400l-1.400-1.400-1.600 1.600V4h-2v7.600L9.400 10 8 11.400l4 4zM4 15v3q0 2 2 2h12q2 0 2-2v-3h-2v3H6v-3z" /></Mi></Cell>
          <Cell $w={96}><MdMoreVert size={48} /></Cell>
          <Spacer $w={26} />
        </HeaderRow>
      </ViewerHeader>
      <Round $x={42}>
        <svg width="20" height="24" viewBox="0 0 20 24" fill="none" stroke="#fff" strokeWidth="4"><path d="M15 1L4 12l11 11" /></svg>
      </Round>
      <Round $x={3717}>
        <svg width="20" height="24" viewBox="0 0 20 24" fill="none" stroke="#fff" strokeWidth="4"><path d="M5 1l11 11L5 23" /></svg>
      </Round>
      <Pager>
        <PagerText>
          <Fit w={60}>Page</Fit>
          <Spacer $w={38} />
          <Fit w={15}>3</Fit>
          <Spacer $w={40} />
          <Fit w={10}>/</Fit>
          <Spacer $w={34} />
          <Fit w={27}>14</Fit>
        </PagerText>
        <Spacer />
        <PagerRule />
        <Spacer $w={30} />
        <svg width="28" height="28" viewBox="0 0 28 28" stroke="#9a9a9a" strokeWidth="4"><path d="M0 14h28" /></svg>
        <Spacer $w={42} />
        <MdZoomIn size={48} />
        <Spacer $w={42} />
        <svg width="28" height="28" viewBox="0 0 28 28" stroke="#fff" strokeWidth="4"><path d="M0 14h28M14 0v28" /></svg>
        <Spacer $w={30} />
      </Pager>
    </Viewer>
  );
}

/* ---------- taskbar ---------- */

const Taskbar = styled.div`
  height: 100px;
  flex: none;
  display: flex;
  align-items: stretch;
  background: linear-gradient(90deg, #2c2d20 0, #2e2f21 25%, #27291d 45%, #323327 60%, #343529 80%, #2f3025 100%);
  color: #fff;
`;

const TaskSearch = styled.div`
  width: 860px;
  flex: none;
  display: flex;
  align-items: center;
  gap: 31px;
  padding-left: 28px;
  border: 3px solid #5f5f5f;
  background: #333;
  color: #dcdcdc;
  font-size: 37px;
`;

const App120 = styled.div<{ $active?: boolean; $open?: boolean }>`
  width: 120px;
  margin-right: 4px;
  flex: none;
  display: flex;
  align-items: center;
  justify-content: center;
  position: relative;
  background: ${(p) => (p.$active ? "#53554b" : "transparent")};
  &::after {
    content: "";
    display: ${(p) => (p.$active || p.$open ? "block" : "none")};
    position: absolute;
    left: ${(p) => (p.$active ? 0 : 9)}px;
    right: ${(p) => (p.$active ? 0 : 9)}px;
    bottom: 0;
    height: 5px;
    background: #b9bab6;
  }
`;

const Weather = styled.div`
  display: flex;
  align-items: center;
  gap: 21px;
  font-size: 34px;
  margin-right: 29px;
  padding-top: 2px;
`;

const Lang = styled.div`
  display: flex;
  align-items: center;
  margin: 0 29px 0 17px;
  padding-top: 2px;
  font-size: 28px;
`;

const Clock = styled.div`
  width: 160px;
  flex: none;
  display: flex;
  flex-direction: column;
  align-items: center;
  justify-content: center;
  font-size: 29px;
  line-height: 47px;
  padding-top: 1px;
`;

const ShowDesktop = styled.div`
  width: 12px;
  margin-left: 31px;
  border-left: 2px solid #85867e;
`;

const Tray = ({ children, w = 2.500 }: { children: React.ReactNode; w?: number }) => (
  <Cell $w={80}>
    <svg width="40" height="40" viewBox="0 0 40 40" fill="none" stroke="#fff" strokeWidth={w}>{children}</svg>
  </Cell>
);

function TaskbarRow() {
  return (
    <Taskbar>
      <Cell $w={120}>
        <svg width="40" height="40" viewBox="0 0 40 40" fill="#fff"><path d="M0 5.700l16.500-2.300v15.800H0zM18.500 3.100L40 0v19.200H18.500zM0 21h16.500v15.700L0 34.400zM18.500 21H40v19l-21.500-3z" /></svg>
      </Cell>
      <TaskSearch>
        <svg width="50" height="50" viewBox="0 0 50 50" fill="none" stroke="#fff" strokeWidth="3"><circle cx="32" cy="18" r="15.500" /><path d="M21 29L1 49" /></svg>
        <Fit w={327}>Type here to search</Fit>
      </TaskSearch>
      <Cell $w={120}>
        <svg width="40" height="40" viewBox="0 0 40 40" fill="none" stroke="#fff" strokeWidth="2.500">
          <path d="M1.500 1v7.500h23V1M1.500 39v-7.500h23V39M1.500 12.500h23v15h-23zM36.500 1v10M36.500 20v19" /><circle cx="36.500" cy="16" r="2.500" fill="#fff" />
        </svg>
      </Cell>
      <Spacer $w={7} />
      <App120>
        <svg width="54" height="48" viewBox="0 0 54 48">
          <path fill="#e6a20f" d="M0 4q0-3 3-3h18l5 5v8H0z" /><path fill="#ffd666" d="M0 10h25l4-4h22q3 0 3 3v31q0 4-4 4H4q-4 0-4-4z" />
          <path fill="#3a96dd" d="M10 28q0-5 5-5h24q5 0 5 5v19h-8V36q0-4-4-4H22q-4 0-4 4v11h-8z" />
        </svg>
      </App120>
      <App120><FaSpotify size={58} color="#1ed760" /></App120>
      <App120>
        <svg width="54" height="54" viewBox="0 0 54 54">
          <path fill="#ffd900" d="M0 0h54v27L28 54H0z" /><path fill="#3b3a35" d="M28 27h26L28 54z" /><path fill="#f2b30d" d="M54 27v27H28z" />
        </svg>
      </App120>
      <App120>
        <svg width="62" height="62" viewBox="0 0 62 62">
          <path fill="#ff7a76" d="M31 0l17 17-17 12-17-12z" /><path fill="#80b3ff" d="M15 16l14 15-14 15L0 31z" />
          <path fill="#8fd35f" d="M47 16l15 15-15 15-14-15z" /><path fill="#ffdc73" d="M31 34l16 13-16 15-16-15z" />
          <path d="M23 8l8 10v26M31 20l9 11" stroke="#26281c" strokeWidth="3" fill="none" />
          <circle cx="31" cy="18" r="4" fill="#26281c" /><circle cx="41" cy="32" r="4" fill="#26281c" /><circle cx="31" cy="44" r="4" fill="#26281c" />
        </svg>
      </App120>
      <App120 $active><Firefox s={55} /></App120>
      <App120 $open>
        <svg width="60" height="60" viewBox="0 0 60 60">
          <circle cx="30" cy="30" r="30" fill="#75aadb" />
          <text x="31" y="43" textAnchor="middle" fontFamily="Liberation Serif, serif" fontSize="39" fill="#fff">R</text>
        </svg>
      </App120>
      <Spacer />
      <Weather>
        <svg width="62" height="52" viewBox="0 0 62 52">
          <defs><linearGradient id="cl" x1="0" y1="0" x2="0" y2="1"><stop offset="0" stopColor="#8fb4ee" /><stop offset="1" stopColor="#d8e8ff" /></linearGradient></defs>
          <path fill="url(#cl)" d="M13 51Q0 50 0 38t12-12Q14 12 28 12t17 12q16 1 16 14T48 51z" />
          <circle cx="54" cy="8" r="7.500" fill="#c42b1c" />
        </svg>
        <Fit w={52}>0°C</Fit>
        <Fit w={108}>Cloudy</Fit>
      </Weather>
      <Tray><path d="M5 27l15-15 15 15" /></Tray>
      <Cell $w={80}><FaDiscord size={36} color="#fff" /></Cell>
      <Tray><path d="M9 10h16v29H9zM11 1h12v9H11zM15 5v2M19 5v2" /><path d="M22 33l5 5 8-9" stroke="#fff" /></Tray>
      <Tray>
        <path d="M38 18V2L2 6v29l20 3" /><path d="M12 18q1-6 7-6 5 0 6 5M26 12v6h-6M25 24q-2 5-6 5-5 0-7-5M11 30v-6h5" />
        <circle cx="31" cy="31" r="9" fill="#2b74bd" stroke="none" />
      </Tray>
      <Tray><path d="M2 15h6l7-9v28l-7-9H2zM20 14q4 6 0 12M26 9q8 11 0 22M32 4q12 16 0 32" /></Tray>
      <Tray><path d="M4 9v27M1 8h8v8H1zM10 5h29v24H6M20 29v6M13 35.500h15" /></Tray>
      <Tray>
        <path d="M4 5v6M10 5v6M2 11h10v4q0 4-5 4t-5-4zM7 19v16M14 11h21v20H9M37 16v9" /><rect x="12" y="15" width="19" height="12" fill="#fff" stroke="none" />
      </Tray>
      <Cell $w={80}>
        <svg width="40" height="40" viewBox="0 0 40 40">
          <rect x="1" y="1" width="38" height="38" fill="#111a10" stroke="#5c9a08" strokeWidth="2" />
          {["#c46a5a", "#b9854a", "#a05a90", "#6f6ac0", "#4a8ac0", "#3aa04a"].map((c, i) => (
            <path key={c} d={`M5 ${6.500 + i * 5.200}h30`} stroke={c} strokeWidth="4" strokeDasharray="4.300 .9" />
          ))}
        </svg>
      </Cell>
      <Lang><Fit w={57}>ENG</Fit></Lang>
      <Clock><Fit w={105}>5:00 PM</Fit><Fit w={151}>2023-01-29</Fit></Clock>
      <Spacer $w={22} />
      <Tray><path d="M2 2h36v23M2 2v31h13l6 6v-6h2" /><path d="M36 23q4 8-1 12-4 4-10 3 8-4 8-13z" /></Tray>
      <ShowDesktop />
    </Taskbar>
  );
}

/* ---------- browser chrome ---------- */

function Chrome() {
  return (
    <>
      <TabStrip>
        <PinnedTab><Firefox /></PinnedTab>
        {tabs.map((t) => (
          <Tab key={t.t} $active={t.active}>
            {t.i}
            <TabTitle $icon={!!t.i}><Fit w={t.w}>{t.t}</Fit></TabTitle>
            <TabClose><Close c={t.active ? "#fbfbfe" : undefined} /></TabClose>
          </Tab>
        ))}
        <Cell $w={98}><Line c="#c0c0c2" w={2.800} s={36} d="M20 3.500v33M3.500 20h33" /></Cell>
        <Cell $w={104}><Line c="#c0c0c2" w={2.800} s={36} d="M4 11l16 16 16-16" /></Cell>
        <Spacer />
        <Cell $w={115}><svg width="26" height="26" viewBox="0 0 26 26" stroke="#c4c4c6" strokeWidth="2"><path d="M0 12h26" /></svg></Cell>
        <Cell $w={115}><svg width="26" height="26" viewBox="0 0 26 26" fill="none" stroke="#c4c4c6" strokeWidth="2"><path d="M1 6h18v19H1zM6 6V1h19v18h-6" /></svg></Cell>
        <Cell $w={115}><Close s={27} w={1.800} c="#d0d0d2" /></Cell>
      </TabStrip>
      <NavBar>
        <Cell $w={90}><Line d="M37 20H4M17 6L3 20l14 14" /></Cell>
        <Cell $w={90}><Line c="#626264" d="M3 20h33M23 6l14 14-14 14" /></Cell>
        <Cell $w={90}><Line d="M36 22A16 16 0 1 1 31 10l4 4M36 4v11H25" /></Cell>
        <Cell $w={90}><Line d="M3 20L20 3l17 17M7 17v20h26V17M15 37V27q0-4 5-4t5 4v10" /></Cell>
        <UrlBar>
          <Cell $w={70}><Line d="M20 2l16 7v7c0 11-6 18-16 22C10 34 4 27 4 16V9z" /></Cell>
          <Cell $w={70}><Line><rect x="6.500" y="19" width="27" height="19" rx="3" /><path d="M11.500 19v-9q0-8 8.500-8t8.500 8v9" /></Line></Cell>
          <Cell $w={70}><Line><path d="M4 13h17M19 27h17" /><circle cx="30" cy="13" r="5" /><circle cx="9" cy="27" r="5" /></Line></Cell>
          <Url><Fit w={1256}>https://drive.<b>google.com</b>/drive/folders/1NSxEfkBQmmthHmLGSNfKDyzlWmRZ55jS</Fit></Url>
          <ZoomChip><Fit w={52}>80%</Fit></ZoomChip>
          <Cell $w={70}><Line d="M20 2.500l5 11.500 12.500 1.200-9.500 8.300 3 13L20 30 9 36.500l3-13-9.500-8.300L15 14z" /></Cell>
        </UrlBar>
        <Cell $w={90}><Line d="M6 6.500h28q2.500 0 2.500 2.500v8q0 9-6 14-10.500 8-21 0-6-5-6-14V9Q3.500 6.500 6 6.500zM13 16l7 7 7-7" /></Cell>
        <Cell $w={90}><Line d="M4 4v33M12 11v26M20 11v26M27 11l9 26" /></Cell>
        <Cell $w={90}><Line><rect x="2" y="6.500" width="36" height="28" rx="4" /><path d="M19 6.500v28M8 13h5M8 20h5M8 27h5" /></Line></Cell>
        <Cell $w={90}><LetterTile $bg="#acacae" $c="#202022" $s={27} $r={20}>A</LetterTile></Cell>
        <Cell $w={90}>
          <svg width="36" height="40" viewBox="0 0 36 40"><path fill="#e01010" d="M18 0l18 6v12c0 11-7 18-18 22C7 36 0 29 0 18V6z" /><path fill="#fff" d="M11 18h14v11H11z" /><path d="M14 18v-5q0-3 4-3t4 3v5" fill="none" stroke="#fff" strokeWidth="2.500" /></svg>
          <Badge $c="#5b5b5d">76</Badge>
        </Cell>
        <Cell $w={90}>
          <ExtTile $c="#bfbfc1" $r={7}><Line s={36} c="#fff" d="M10 17q9-5 9-11-5-3-5 7 0 12-2 19 4-11 9-11 4 0 2 6t2 6q3 0 5-4" /></ExtTile>
        </Cell>
        <Cell $w={90}>
          <svg width="40" height="40" viewBox="0 0 40 40"><path fill="#5a0006" d="M34 0l6 4v36H8l-8-5 34-2z" /><path fill="#e8131b" d="M0 0h34v35H0z" /><text x="17" y="28" textAnchor="middle" fontFamily={UI} fontWeight="800" fontSize="30" fill="#fff">S</text></svg>
        </Cell>
        <Cell $w={90}>
          <svg width="40" height="40" viewBox="0 0 40 40"><circle cx="20" cy="20" r="20" fill="#de5833" /><circle cx="20" cy="20" r="16.500" fill="#de5833" stroke="#fff" strokeWidth="2" /><path fill="#fff" d="M13 12q5-4 10 0 4 4 3 11l2 11q-5 3-9 2L13 18z" /><path fill="#fd0" d="M20 19q7-2 11 1-5 4-11 3z" /><path fill="#3fa535" d="M18 29l10 1v4l-9 0z" /><circle cx="20" cy="15" r="1.500" fill="#234" /></svg>
        </Cell>
        <Cell $w={90}>
          <svg width="42" height="32" viewBox="0 0 42 32"><path fill="#f5ede0" stroke="#e8934a" strokeWidth="1.500" d="M12 5l4-3 3 2q7-2 13 0l6-1-1 6q3 5 3 13l-6 6-10 2H10q-8 0-8-5l11-10z" /><path fill="#141414" d="M20 6q8-2 14 2l4 9-3 4-5-7-6-2-12 9-8 4 10-11zM3 25l4-3 3 5-5 2zM30 20l5 3-3 5-6 1z" /><circle cx="23" cy="16" r="3.500" fill="#fff" /><circle cx="23" cy="16" r="1.800" fill="#000" /></svg>
        </Cell>
        <Cell $w={90}>
          <svg width="40" height="40" viewBox="0 0 40 40"><circle cx="20" cy="20" r="20" fill="#8b8b8d" /><path d="M6 13Q10 5 17 3" stroke="#fff" strokeWidth="3" fill="none" /><path fill="#d8d8d8" d="M9 15h22l-2 22H11z" /><path d="M20 21l4 5M25 28l-2 5h-6l-2-5 4-6" stroke="#444" strokeWidth="2.500" fill="none" /></svg>
          <Badge $c="#ff0f0f">4</Badge>
        </Cell>
        <Cell $w={90}>
          <svg width="34" height="40" viewBox="0 0 34 40"><path fill="#00aef0" d="M17 0q13 0 13 14v14l4 8-5-1-3 4-4-4-5 4-5-4-4 4-3-4-5 1 4-8V14Q4 0 17 0z" /><path d="M11 22q6 6 13 0" stroke="#fff" strokeWidth="2.500" fill="none" /><circle cx="13" cy="14" r="3" fill="#fff" /><circle cx="22" cy="14" r="3" fill="#fff" /></svg>
          <Badge $c="#2f0d3a">1</Badge>
        </Cell>
        <Cell $w={90}>
          <svg width="40" height="40" viewBox="0 0 40 40"><rect width="40" height="40" rx="4" fill="#d32d27" /><circle cx="8" cy="20.500" r="3.200" fill="#fff" /><circle cx="18" cy="20.500" r="3.200" fill="#fff" /><circle cx="28" cy="20.500" r="3.200" fill="#fff" /><path fill="#fff" d="M34 13h1.500v15H34z" /></svg>
          <Badge $c="#5b5b5d">2</Badge>
        </Cell>
        <Cell $w={90}>
          <svg width="40" height="40" viewBox="0 0 40 40"><rect width="40" height="40" fill="#e8202c" /><g fill="none" stroke="#fff" strokeWidth="3"><path d="M8 26q3-2 2-7t4-7q4 0 6 6 2-6 6-6 5 2 4 7t2 7" /></g><circle cx="14" cy="13" r="3" fill="#fff" /><circle cx="26" cy="13" r="3" fill="#fff" /><circle cx="20" cy="17.500" r="3.500" fill="#fff" /><circle cx="7.500" cy="25.500" r="3" fill="#fff" /><circle cx="32.500" cy="25.500" r="3" fill="#fff" /><circle cx="20" cy="25.500" r="3" fill="#fff" /></svg>
        </Cell>
        <Cell $w={90}><Line d="M13 10V6q0-4.500 4-4.500t4 4.500v4h12q3 0 3 3v23q0 2.500-3 2.500H8q-3 0-3-3v-8h4q5 0 5-4.500T9 18.500H5V13q0-3 3-3z" /></Cell>
        <Cell $w={90}><Line c="#a8a8aa" d="M6 9h28M6 19h28M6 29h28" /></Cell>
      </NavBar>
      <Bookmarks>
        {marks.map((m) => (
          <Mark key={m.t}><MarkIcon>{m.i}</MarkIcon><Fit w={m.w}>{m.t}</Fit></Mark>
        ))}
        <Spacer />
        <Mark><Line s={36} d="M3 4l15 16L3 36M20 4l15 16-15 16" /></Mark>
        <Mark><MarkIcon><FolderLine /></MarkIcon><Fit w={229}>Other Bookmarks</Fit></Mark>
      </Bookmarks>
    </>
  );
}

export default function App() {
  return (
    <Screen>
      <Global />
      <Chrome />
      <Content>
        <DrivePage />
        <PdfViewer />
      </Content>
      <TaskbarRow />
    </Screen>
  );
}
